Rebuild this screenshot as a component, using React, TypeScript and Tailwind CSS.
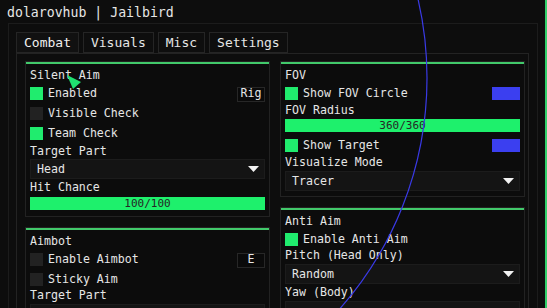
import React from "react"

const txt = "text-[#e6e6e6]"

function Check({ on }: { on?: boolean }) {
  return <div className={`w-[13px] h-[13px] shrink-0 ${on ? "bg-[#20ec6e]" : "bg-[#222222]"}`} />
}

function Row({ label, on, right, className = "" }: { label: string; on?: boolean; right?: React.ReactNode; className?: string }) {
  return (
    <div className={`flex items-center h-[16px] ${className}`}>
      <Check on={on} />
      <span className="ml-[5px]">{label}</span>
      {right && <div className="ml-auto">{right}</div>}
    </div>
  )
}

function Key({ k }: { k: string }) {
  return (
    <div className="w-[28px] h-[15px] mt-[2px] border border-[#272727] bg-[#0a0a0a] flex items-center justify-center leading-none">
      {k}
    </div>
  )
}

function Swatch() {
  return <div className="w-[28px] h-[13px] bg-[#3b3ff0]" />
}

function Label({ children, className = "" }: { children: React.ReactNode; className?: string }) {
  return <div className={`h-[16px] leading-[16px] ${className}`}>{children}</div>
}

function Dropdown({ value, className = "" }: { value: string; className?: string }) {
  return (
    <div className={`h-[20px] bg-[#141414] border border-[#1c1c1c] flex items-center justify-between pl-[6px] pr-[5px] ${className}`}>
      <span>{value}</span>
      <svg width="11" height="6" viewBox="0 0 11 6">
        <polygon points="0,0 11,0 5.5,6" fill="#f2f2f2" />
      </svg>
    </div>
  )
}

function Slider({ value, className = "" }: { value: string; className?: string }) {
  return (
    <div className={`h-[13px] bg-[#1ef06c] flex items-center justify-center text-[11px] leading-none text-[#262626] ${className}`}>
      {value}
    </div>
  )
}

function Section({ title, children, className = "" }: { title: string; children: React.ReactNode; className?: string }) {
  return (
    <div className={`border border-[#222222] bg-[#0c0c0c] ${className}`}>
      <div className="h-[2px] bg-[#42c96b]" />
      <div className="px-[4px] pt-[3px]">
        <Label>{title}</Label>
        {children}
      </div>
    </div>
  )
}

export default function App() {
  const tabs = ["Combat", "Visuals", "Misc", "Settings"]
  return (
    <div className={`w-[547px] h-[308px] relative overflow-hidden bg-[#0d0d0d] flex font-['DejaVu_Sans_Mono',monospace] ${txt}`}>
      <div className="w-[545px] pt-[5px]">
        <div className="h-[16px] leading-[16px] pl-[7px] text-[13.2px]">dolarovhub | Jailbird</div>

        <div className="mt-[2px] ml-[8px] w-[530px] h-[300px] border border-[#1c1c1c] pt-[8px] pl-[7px] pr-[8px]">
          <div className="flex gap-[4px] h-[21px] text-[13px]">
            {tabs.map((t, i) => (
              <div
                key={t}
                className={`px-[7px] border border-[#252525] leading-[19px] ${i === 0 ? "bg-[#111111] text-[#f0f0f0]" : "bg-[#0e0e0e]"}`}
              >
                {t}
              </div>
            ))}
          </div>

          <div className="border border-[#232323] h-[260px] pt-[7px] pl-[8px] flex gap-[10px] text-[11.6px] leading-[16px]">
            <div className="w-[245px] flex flex-col gap-[10px]">
              <Section title="Silent Aim" className="pb-[6px]">
                <Row label="Enabled" on className="mt-[2px]" right={<Key k="Rig" />} />
                <Row label="Visible Check" className="mt-[4px]" />
                <Row label="Team Check" on className="mt-[4px]" />
                <Label className="mt-[2px]">Target Part</Label>
                <Dropdown value="Head" />
                <Label>Hit Chance</Label>
                <Slider value="100/100" className="mt-[2px]" />
              </Section>
              <Section title="Aimbot" className="h-[120px]">
                <Row label="Enable Aimbot" className="mt-[2px]" right={<Key k="E" />} />
                <Row label="Sticky Aim" className="mt-[4px]" />
                <Label>Target Part</Label>
                <Dropdown value="" className="mt-[1px]" />
              </Section>
            </div>

            <div className="w-[245px] flex flex-col gap-[10px]">
              <Section title="FOV" className="pb-[5px]">
                <Row label="Show FOV Circle" on className="mt-[2px]" right={<Swatch />} />
                <Label className="mt-[1px]">FOV Radius</Label>
                <Slider value="360/360" className="mt-[1px]" />
                <Row label="Show Target" on className="mt-[5px]" right={<Swatch />} />
                <Label className="mt-[1px]">Visualize Mode</Label>
                <Dropdown value="Tracer" className="mt-[1px]" />
              </Section>
              <Section title="Anti Aim" className="h-[120px]">
                <Row label="Enable Anti Aim" on className="mt-[2px]" />
                <Label>Pitch (Head Only)</Label>
                <Dropdown value="Random" className="mt-[1px]" />
                <Label>Yaw (Body)</Label>
                <Dropdown value="" className="mt-[1px]" />
              </Section>
            </div>
          </div>
        </div>
      </div>
      <div className="w-[2px] h-full bg-[#2fcf6a]" />

      <svg className="absolute left-0 top-0 pointer-events-none" width="547" height="308" viewBox="0 0 547 308">
        <circle cx="78" cy="78" r="349" fill="none" stroke="#3a3ae6" strokeWidth="1.2" />
        <polygon points="67,75 81,82 73,89" fill="#20e070" />
      </svg>
    </div>
  )
}
